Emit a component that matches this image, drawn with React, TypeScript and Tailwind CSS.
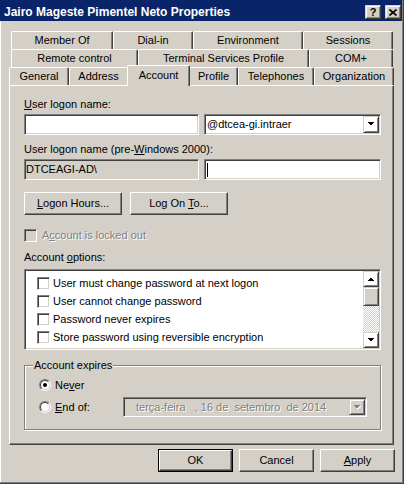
const raised =
  "border border-t-white border-l-white border-r-[#404040] border-b-[#404040] shadow-[inset_-1px_-1px_0_#808080]";
const raisedSm =
  "border border-t-[#d4d0c8] border-l-[#d4d0c8] border-r-[#404040] border-b-[#404040] shadow-[inset_1px_1px_0_#fff,inset_-1px_-1px_0_#808080]";
const sunken =
  "border border-t-[#808080] border-l-[#808080] border-r-white border-b-white shadow-[inset_1px_1px_0_#404040,inset_-1px_-1px_0_#d4d0c8]";
const grayText = "text-[#808080] [text-shadow:1px_1px_0_#fff]";

type TabDef = {
  label: string;
  w: string;
  noLeft?: boolean;
  noRight?: boolean;
  selected?: boolean;
};

const row1: TabDef[] = [
  { label: "Member Of", w: "w-[102px]" },
  { label: "Dial-in", w: "w-[80px]" },
  { label: "Environment", w: "w-[110px]" },
  { label: "Sessions", w: "w-[90px]" },
];
const row2: TabDef[] = [
  { label: "Remote control", w: "w-[127px]" },
  { label: "Terminal Services Profile", w: "w-[171px]" },
  { label: "COM+", w: "w-[84px]" },
];
const row3: TabDef[] = [
  { label: "General", w: "w-[60px]" },
  { label: "Address", w: "w-[58px]", noRight: true },
  { label: "Account", w: "w-[63px]", selected: true },
  { label: "Profile", w: "w-[48px]", noLeft: true },
  { label: "Telephones", w: "w-[76px]" },
  { label: "Organization", w: "w-[80px]" },
];

function Tab({ t }: { t: TabDef }) {
  return (
    <div
      className={[
        "shrink-0 flex items-center justify-center rounded-tl-[2px] rounded-tr-[2px] border-t border-t-white",
        t.w,
        t.noLeft ? "" : "border-l border-l-white",
        t.noRight ? "" : "border-r border-r-[#404040] shadow-[inset_-1px_0_0_#808080]",
        t.selected ? "h-[21px] -mb-[1px] pb-[2px] relative z-10 bg-[#d4d0c8]" : "h-[18px]",
      ].join(" ")}
    >
      {t.label}
    </div>
  );
}

function Arrow({ up, gray }: { up?: boolean; gray?: boolean }) {
  return (
    <svg width="8" height="5" viewBox="0 0 8 5" shapeRendering="crispEdges">
      {gray && (
        <polygon points={up ? "1.5,5 8.5,5 5,1.5" : "1.5,1 8.5,1 5,4.5"} fill="#fff" />
      )}
      <polygon
        points={up ? "0.5,4 7.5,4 4,0.5" : "0.5,0 7.5,0 4,3.5"}
        fill={gray ? "#808080" : "#000"}
      />
    </svg>
  );
}

function Check({ disabled }: { disabled?: boolean }) {
  return (
    <div
      className={`w-[13px] h-[13px] shrink-0 ${disabled ? "bg-[#d4d0c8]" : "bg-white"} ${sunken}`}
    />
  );
}

function Radio({ on }: { on?: boolean }) {
  return (
    <div className="w-[12px] h-[12px] shrink-0 rounded-full border border-t-[#808080] border-l-[#808080] border-r-white border-b-white">
      <div className="w-full h-full rounded-full bg-white border border-t-[#404040] border-l-[#404040] border-r-[#d4d0c8] border-b-[#d4d0c8] flex items-center justify-center">
        {on && <div className="w-[4px] h-[4px] rounded-full bg-black" />}
      </div>
    </div>
  );
}

function Btn({ children, def }: { children: React.ReactNode; def?: boolean }) {
  if (def) {
    return (
      <div className="w-[75px] h-[23px] border border-black">
        <div className={`w-full h-full flex items-center justify-center ${raised}`}>{children}</div>
      </div>
    );
  }
  return (
    <div className={`w-[75px] h-[23px] flex items-center justify-center ${raised}`}>{children}</div>
  );
}

const options = [
  "User must change password at next logon",
  "User cannot change password",
  "Password never expires",
  "Store password using reversible encryption",
];

export default function App() {
  return (
    <div className="w-[404px] h-[484px] bg-[#d4d0c8] text-black text-[11px] leading-[13px] font-['Liberation_Sans',Arial,sans-serif] shadow-[inset_-1px_-1px_0_#404040,inset_-2px_-2px_0_#808080,inset_1px_0_0_#fff] overflow-hidden">
      {/* title bar */}
      <div className="w-[402px] h-[21px] bg-[#0a246a] flex items-center pt-[3px] pl-[4px] pr-[1px]">
        <span className="flex-1 text-white font-bold text-[12px]">
          Jairo Mageste Pimentel Neto Properties
        </span>
        <div className={`w-[16px] h-[14px] flex items-center justify-center bg-[#d4d0c8] ${raisedSm}`}>
          <span className="text-black font-bold text-[11px] leading-none">?</span>
        </div>
        <div className={`w-[16px] h-[14px] ml-[4px] flex items-center justify-center bg-[#d4d0c8] ${raisedSm}`}>
          <svg width="8" height="7" viewBox="0 0 8 7">
            <path d="M0.5 0.5 L7.5 6.5 M7.5 0.5 L0.5 6.5" stroke="#000" strokeWidth="1.6" />
          </svg>
        </div>
      </div>

      {/* tabs */}
      <div className="mt-[10px]">
        <div className="flex h-[18px] ml-[11px]">
          {row1.map((t) => (
            <Tab key={t.label} t={t} />
          ))}
        </div>
        <div className="flex h-[18px] ml-[11px]">
          {row2.map((t) => (
            <Tab key={t.label} t={t} />
          ))}
        </div>
        <div className="flex items-end h-[18px] ml-[9px]">
          {row3.map((t) => (
            <Tab key={t.label} t={t} />
          ))}
        </div>
      </div>

      {/* page */}
      <div className="ml-[9px] w-[385px] h-[360px] border-l border-t border-l-white border-t-white border-r border-b border-r-[#404040] border-b-[#404040] shadow-[inset_-1px_-1px_0_#808080] pl-[14px] pt-[12px]">
        <div className="h-[13px]">
          <u>U</u>ser logon name:
        </div>
        <div className="mt-[3px] flex gap-[5px] w-[357px]">
          <div className={`w-[175px] h-[21px] bg-white ${sunken}`} />
          <div className={`w-[177px] h-[21px] bg-white p-[1px] flex ${sunken}`}>
            <div className="flex-1 flex items-center pl-[1px]">@dtcea-gi.intraer</div>
            <div className={`w-[16px] h-full flex items-center justify-center ${raisedSm}`}>
              <Arrow />
            </div>
          </div>
        </div>

        <div className="mt-[8px] h-[13px]">
          User logon name (pre-<u>W</u>indows 2000):
        </div>
        <div className="mt-[3px] flex gap-[5px] w-[357px]">
          <div className={`w-[175px] h-[21px] bg-[#d4d0c8] flex items-center pl-[1px] ${sunken}`}>
            DTCEAGI-AD\
          </div>
          <div className={`w-[177px] h-[21px] bg-white flex items-center ${sunken}`}>
            <div className="ml-[2px] w-[1px] h-[14px] bg-black" />
          </div>
        </div>

        <div className="mt-[12px] flex gap-[8px]">
          <div className={`w-[98px] h-[23px] flex items-center justify-center ${raised}`}>
            <span>
              <u>L</u>ogon Hours...
            </span>
          </div>
          <div className={`w-[98px] h-[23px] flex items-center justify-center ${raised}`}>
            <span>
              Log On <u>T</u>o...
            </span>
          </div>
        </div>

        <div className="mt-[14px] flex items-center h-[13px]">
          <Check disabled />
          <span className={`ml-[5px] ${grayText}`}>
            A<u>c</u>count is locked out
          </span>
        </div>

        <div className="mt-[9px] h-[13px]">
          Account <u>o</u>ptions:
        </div>

        <div className={`mt-[5px] w-[357px] h-[81px] bg-white p-[1px] flex ${sunken}`}>
          <div className="flex-1 pt-[3px] pl-[11px]">
            {options.map((o) => (
              <div key={o} className="h-[18px] flex items-center">
                <Check />
                <span className="ml-[3px]">{o}</span>
              </div>
            ))}
          </div>
          <div className="w-[16px] flex flex-col">
            <div className={`h-[16px] flex items-center justify-center ${raisedSm}`}>
              <Arrow up />
            </div>
            <div className={`h-[19px] bg-[#d4d0c8] ${raisedSm}`} />
            <div className="flex-1 bg-[repeating-conic-gradient(#fff_0_25%,#d4d0c8_0_50%)] bg-[length:2px_2px]" />
            <div className={`h-[16px] flex items-center justify-center ${raisedSm}`}>
              <Arrow />
            </div>
          </div>
        </div>

        {/* account expires group */}
        <div className="mt-[15px] w-[357px] border border-[#808080] shadow-[inset_1px_1px_0_#fff,1px_1px_0_#fff] pl-[14px] pb-[12px]">
          <div className="-mt-[7px] -ml-[6px] w-fit h-[13px] px-[1px] bg-[#d4d0c8]">Account expires</div>
          <div className="mt-[3px] h-[20px] flex items-center">
            <Radio on />
            <span className="ml-[4px]">
              Ne<u>v</u>er
            </span>
          </div>
          <div className="mt-[2px] h-[20px] flex items-center">
            <div className="w-[84px] flex items-center">
              <Radio />
              <span className="ml-[4px]">
                <u>E</u>nd of:
              </span>
            </div>
            <div className={`w-[244px] h-[20px] bg-[#d4d0c8] p-[1px] flex ${sunken}`}>
              <div className={`flex-1 flex items-center pl-[11px] whitespace-pre ${grayText}`}>
                terça-feira   , 16 de  setembro  de 2014
              </div>
              <div className={`w-[16px] h-full flex items-center justify-center ${raisedSm}`}>
                <Arrow gray />
              </div>
            </div>
          </div>
        </div>
      </div>

      {/* dialog buttons */}
      <div className="mt-[4px] ml-[158px] flex gap-[6px]">
        <Btn def>OK</Btn>
        <Btn>Cancel</Btn>
        <Btn>
          <span>
            <u>A</u>pply
          </span>
        </Btn>
      </div>
    </div>
  );
}
